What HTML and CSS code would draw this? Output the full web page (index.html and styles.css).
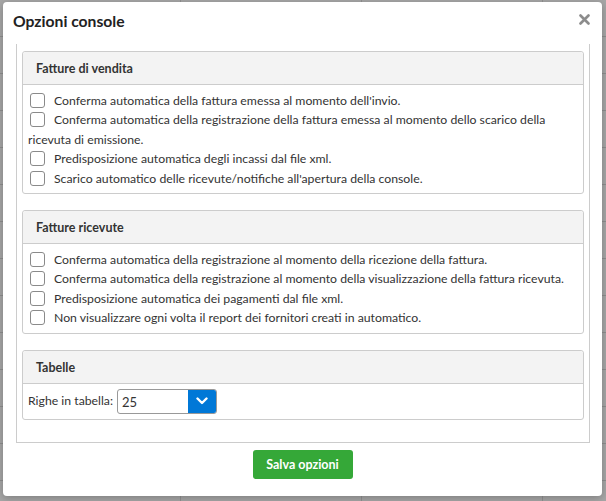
FILE: index.html
```html
<!DOCTYPE html>
<html lang="it">
<head>
  <meta charset="UTF-8" />
  <title>Opzioni console</title>
  <link rel="stylesheet" href="styles.css">
</head>
<body>
  <div class="modal">
    <div class="modal-header">
      <h2>Opzioni console</h2>
      <span class="close">
        <svg width="11" height="11" viewBox="0 0 11 11"><path d="M1.5 1.5 L9.5 9.5 M9.5 1.5 L1.5 9.5" stroke="#8c8c8c" stroke-width="2.6" stroke-linecap="round"/></svg>
      </span>
    </div>

    <div class="modal-body">
      <div class="panel">
        <div class="panel-title">Fatture di vendita</div>
        <div class="panel-body">
          <div class="row"><span class="cb"></span>Conferma automatica della fattura emessa al momento dell'invio.</div>
          <div class="row"><span class="cb"></span>Conferma automatica della registrazione della fattura emessa al momento dello scarico della ricevuta di emissione.</div>
          <div class="row"><span class="cb"></span>Predisposizione automatica degli incassi dal file xml.</div>
          <div class="row"><span class="cb"></span>Scarico automatico delle ricevute/notifiche all'apertura della console.</div>
        </div>
      </div>

      <div class="panel">
        <div class="panel-title">Fatture ricevute</div>
        <div class="panel-body">
          <div class="row"><span class="cb"></span>Conferma automatica della registrazione al momento della ricezione della fattura.</div>
          <div class="row"><span class="cb"></span>Conferma automatica della registrazione al momento della visualizzazione della fattura ricevuta.</div>
          <div class="row"><span class="cb"></span>Predisposizione automatica dei pagamenti dal file xml.</div>
          <div class="row"><span class="cb"></span>Non visualizzare ogni volta il report dei fornitori creati in automatico.</div>
        </div>
      </div>

      <div class="panel">
        <div class="panel-title">Tabelle</div>
        <div class="panel-body table-opts">
          <span>Righe in tabella:</span>
          <div class="select">
            <span class="select-value">25</span>
            <span class="select-btn">
              <svg width="12" height="8" viewBox="0 0 12 8"><path d="M1.5 1.5 L6 6 L10.5 1.5" fill="none" stroke="#fff" stroke-width="2.4" stroke-linecap="round" stroke-linejoin="round"/></svg>
            </span>
          </div>
        </div>
      </div>
    </div>

    <div class="modal-footer">
      <button class="btn-save">Salva opzioni</button>
    </div>
  </div>
</body>
</html>
```

FILE: styles.css
```css
body {
  margin: 0;
  height: 501px;
  overflow: hidden;
  font-family: 'Segoe UI', Lato, sans-serif;
  color: #333;
  background-color: #a7a7a7;
  background-image:
    repeating-linear-gradient(to bottom, transparent 0, transparent 36px, #8f8f8f 36px, #8f8f8f 37px),
    repeating-linear-gradient(to right, transparent 0, transparent 180px, #929292 180px, #929292 181px);
}

.modal {
  width: 599px;
  height: 494px;
  margin: 2px 0 0 3px;
  background: #fff;
  border-radius: 4px;
  box-shadow: 0 2px 8px rgba(0,0,0,0.25);
  display: flex;
  flex-direction: column;
}

.modal-header {
  height: 38px;
  padding: 0 12px 0 10px;
  display: flex;
  align-items: center;
  justify-content: space-between;
}

.modal-header h2 {
  margin: 0;
  font-size: 15.7px;
  font-weight: bold;
  color: #222;
}

.close {
  display: flex;
  margin-top: -3px;
}

.modal-body {
  margin: 4px 12px 0 13px;
  padding: 7px 5px 6px 5px;
  border: 1px solid #ccc;
  border-top: none;
}

.panel {
  border: 1px solid #ccc;
  border-radius: 3px;
  margin-bottom: 16px;
}

.panel-title {
  height: 32px;
  line-height: 33px;
  padding-left: 13px;
  background: #f3f3f3;
  border-bottom: 1px solid #ccc;
  border-radius: 3px 3px 0 0;
  font-size: 12.5px;
  font-weight: bold;
}

.panel-body {
  padding: 6px 5px 5px 5px;
  font-size: 12.25px;
  line-height: 19.4px;
}

.cb {
  display: inline-block;
  width: 13px;
  height: 13px;
  border: 1px solid #8a8a8a;
  border-radius: 3px;
  margin: 0 9px 0 2px;
  vertical-align: -3px;
}

.table-opts {
  display: flex;
  align-items: center;
  gap: 4px;
  padding-top: 5px;
  padding-bottom: 5px;
}

.select {
  display: flex;
  width: 100px;
  height: 25px;
  box-sizing: border-box;
  border: 1px solid #999;
  border-radius: 3px;
  overflow: hidden;
}

.select-value {
  flex: 1;
  padding-left: 4px;
  font-size: 13px;
  line-height: 25px;
}

.select-btn {
  width: 28px;
  background: #0078d7;
  display: flex;
  align-items: center;
  justify-content: center;
}

.modal-footer {
  display: flex;
  justify-content: center;
  padding-top: 7px;
}

.btn-save {
  width: 100px;
  height: 29px;
  border: none;
  border-radius: 3px;
  background: #35a838;
  color: #fff;
  font-family: inherit;
  font-size: 12.5px;
  font-weight: bold;
  cursor: pointer;
}
```
